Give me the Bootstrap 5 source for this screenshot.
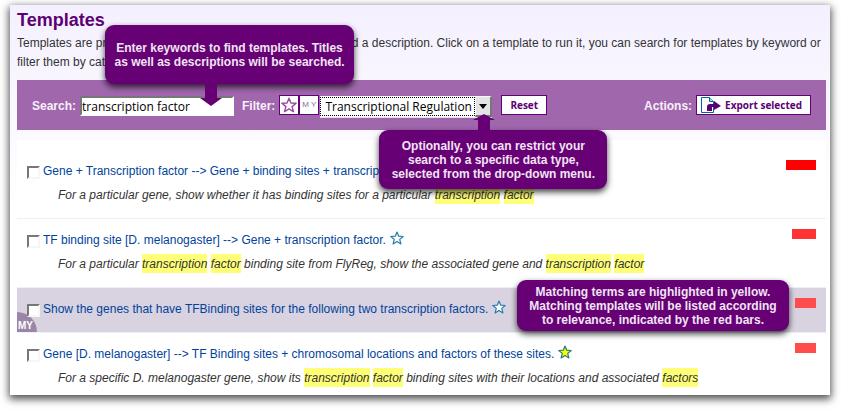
<!DOCTYPE html>
<html lang="en">
<head>
<meta charset="utf-8">
<meta name="viewport" content="width=device-width, initial-scale=1">
<title>Templates</title>
<link href="https://cdn.jsdelivr.net/npm/bootstrap@5.3.0/dist/css/bootstrap.min.css" rel="stylesheet">
<style>
  body { font-family: "Liberation Sans", Arial, sans-serif; font-size: 12px; line-height: 18px; color: #333; background: #fff; }
  .panel { margin: 5px 11px 15px 10px; padding: 4px 4px 8px 7px; background: linear-gradient(#f4f0ff, #fff 200px); box-shadow: 0 3px 8px 1px rgba(0,0,0,.7); }
  .page-title { font-size: 18px; line-height: 22px; color: #5c0073; }
  .intro { line-height: 19px; padding-top: 3px; margin-bottom: 8px; }
  .toolbar { background: #a067ad; padding: 15px 15px 12px; }
  .toolbar-label { color: #f8f0fa; font-weight: 700; line-height: 22px; margin-right: 4px; }
  .filter-label { margin-left: 8px; }
  .search-box { width: 154px; height: 20px; margin-top: 1px; padding: 0; border: 2px solid #fff; border-top-color: #777; border-left-color: #777; background: #fff; color: #000; font: 12px/16px "Open Sans", sans-serif; border-radius: 0; outline: 0; display: block; }
  .tool-btn { height: 20px; border: 1px solid #66007a; background: #fff; color: #5c0073; border-radius: 0; padding: 0; line-height: 18px; font-family: "Open Sans", sans-serif; font-size: 10px; font-weight: 700; }
  .square { width: 20px; }
  .my-btn { font-weight: 400; font-size: 8px; color: #8f6c9e; font-family: "Liberation Sans", sans-serif; }
  .type-filter { background: #fff; height: 22px; width: 172px; margin: 1px 1px 0; border-bottom: 1px solid #e8e4ea; }
  .type-filter select { appearance: none; min-width: 0; border: 1px dotted #000; border-radius: 0; background: #fff; color: #000; font: 12px/18px "Open Sans", sans-serif; padding: 0 0 0 4px; outline: 0; text-overflow: clip; margin: 1px 0; }
  .drop-arrow { width: 17px; background: #e4e4e4; border: 1px solid #f8f8f8; border-right: 2px solid #777; border-bottom: 2px solid #777; pointer-events: none; }
  .results { margin-top: 10px; }
  .result { background: #fff; border-bottom: 1px solid #f1eefb; padding: 10px 10px 14px 10px; }
  .result:first-child { padding-top: 20px; }
  .result:last-child { border: 0; padding-bottom: 0; }
  .result.mine { background: #d9d2e0; }
  .result-text { padding-top: 2px; }
  .result-text a { color: #00439c; text-decoration: none; }
  .result-head input { appearance: none; width: 13px; height: 13px; margin: 4px 3px 0 0; background: #fff; border: 2px solid #f6f6f6; border-top-color: #777; border-left-color: #777; flex: none; }
  .desc { margin: 6px 0 0 31px; font-style: italic; }
  .hit { background: #ffff77; padding: 3px 0 2px; }
  .star { width: 14px; height: 14px; margin-left: 4px; flex: none; }
  .relevance { height: 10px; flex: none; background: #ff4d4d; }
  .relevance.high { background: #f00; }
  .relevance.medium { background: #f33; }
  .my-tag { left: 0; bottom: 0; width: 20px; height: 20px; border-top-right-radius: 20px; background: #9a86a8; color: #fff; font-size: 10px; font-weight: 700; line-height: 13px; padding: 7px 0 0 1px; }
  .callout { z-index: 5; display: flex; align-items: center; justify-content: center; text-align: center; background: #660074; color: #f1e4f4; font-size: 12px; line-height: 14px; font-weight: 700; border-radius: 9px; box-shadow: 0 3px 6px rgba(0,0,0,.75); white-space: nowrap; }
  .callout-search { width: 249px; height: 59px; left: 25px; bottom: 32px; }
  .callout-type { width: 228px; height: 59px; right: -115px; top: 34px; }
  .callout-match { width: 272px; height: 51px; right: 37px; top: -8px; }
  .tail { width: 22px; fill: #660074; }
  .tail-down { left: 95px; top: 58px; height: 23px; }
  .tail-up { left: 94px; bottom: 58px; height: 17px; }
</style>
<script src="https://cdn.jsdelivr.net/npm/bootstrap@5.3.0/dist/js/bootstrap.bundle.min.js"></script>
</head>
<body>
<svg class="d-none" xmlns="http://www.w3.org/2000/svg">
  <symbol id="star" viewBox="0 0 14 14"><path d="M7 1 8.700 5.200 13.200 5.500 9.700 8.400 10.900 12.900 7 10.400 3.100 12.900 4.300 8.400.8 5.500 5.300 5.200Z" stroke-width="1.200" stroke-linejoin="round"/></symbol>
</svg>
<main class="panel">
  <h1 class="page-title fw-bold mb-0">Templates</h1>
  <p class="intro">Templates are predefined searches, each has a simple form and a description. Click on a template to run it, you can search for templates by keyword or filter them by category.</p>

  <form class="toolbar d-flex align-items-start">
    <label class="toolbar-label" for="search">Search:</label>
    <div class="position-relative">
      <input class="search-box" id="search" type="text" value="transcription factor">
      <div class="callout callout-search position-absolute">Enter keywords to find templates. Titles<br>as well as descriptions will be searched.
        <svg class="tail tail-down position-absolute" viewBox="0 0 22 23"><path d="M5 0H17V15H22L11 23 0 15H5Z"/></svg>
      </div>
    </div>
    <label class="toolbar-label filter-label" for="type">Filter:</label>
    <button class="tool-btn square d-flex align-items-center justify-content-center" type="button" aria-label="Favourites"><svg class="flex-shrink-0" width="16" height="16" fill="#fff" stroke="#93499f"><use href="#star"/></svg></button>
    <button class="tool-btn square my-btn" type="button">M Y</button>
    <div class="type-filter position-relative d-flex">
      <select id="type" class="flex-grow-1"><option>Transcriptional Regulation</option></select>
      <span class="drop-arrow d-flex align-items-center justify-content-center flex-shrink-0"><svg width="8" height="5" viewBox="0 0 8 5"><path d="M0 0H8L4 5Z"/></svg></span>
      <div class="callout callout-type position-absolute">Optionally, you can restrict your<br>search to a specific data type,<br>selected from the drop-down menu.
        <svg class="tail tail-up position-absolute" viewBox="0 0 22 17"><path d="M11 0 22 6H17V17H5V6H0Z"/></svg>
      </div>
    </div>
    <button class="tool-btn ms-2 px-2" type="reset">Reset</button>
    <span class="toolbar-label ms-auto">Actions:</span>
    <button class="tool-btn d-flex align-items-center ps-1 pe-2" type="button"><svg class="me-1" width="20" height="16" viewBox="0 0 20 16"><path d="M.5.500H8.500L12.500 4.500V15.500H.5Z" fill="#fff" stroke="#006699"/><path d="M8.500.500V4.500H12.500" fill="#b9dbe8" stroke="#006699"/><path d="M6 14V10Q6 7 9 7H13V4L20 9 13 13V10H11V14Z" fill="#5c0073"/></svg>Export selected</button>
  </form>

  <div class="results">
    <article class="result d-flex justify-content-between">
      <div class="result-text">
        <div class="result-head d-flex"><input type="checkbox" id="t1" aria-label="Select template 1"><a href="#">Gene + Transcription factor --&gt; Gene + binding sites + transcription factor.</a></div>
        <p class="desc">For a particular gene, show whether it has binding sites for a particular <span class="hit">transcription</span> <span class="hit">factor</span></p>
      </div>
      <div class="relevance high" style="width:30px"></div>
    </article>
    <article class="result d-flex justify-content-between">
      <div class="result-text">
        <div class="result-head d-flex"><input type="checkbox" id="t2" aria-label="Select template 2"><a href="#">TF binding site [D. melanogaster] --&gt; Gene + transcription factor.</a><svg class="star" fill="#fff" stroke="#267cab"><use href="#star"/></svg></div>
        <p class="desc">For a particular <span class="hit">transcription</span> <span class="hit">factor</span> binding site from FlyReg, show the associated gene and <span class="hit">transcription</span> <span class="hit">factor</span></p>
      </div>
      <div class="relevance medium" style="width:24px"></div>
    </article>
    <article class="result mine position-relative d-flex justify-content-between">
      <span class="my-tag position-absolute">MY</span>
      <div class="result-text position-relative">
        <div class="result-head d-flex"><input type="checkbox" id="t3" aria-label="Select template 3"><a href="#">Show the genes that have TFBinding sites for the following two transcription factors.</a><svg class="star" fill="#fff" stroke="#267cab"><use href="#star"/></svg></div>
      </div>
      <div class="relevance" style="width:21px"></div>
      <div class="callout callout-match position-absolute">Matching terms are highlighted in yellow.<br>Matching templates will be listed according<br>to relevance, indicated by the red bars.</div>
    </article>
    <article class="result d-flex justify-content-between">
      <div class="result-text">
        <div class="result-head d-flex"><input type="checkbox" id="t4" aria-label="Select template 4"><a href="#">Gene [D. melanogaster] --&gt; TF Binding sites + chromosomal locations and factors of these sites.</a><svg class="star" fill="#ff0" stroke="#267c7b"><use href="#star"/></svg></div>
        <p class="desc">For a specific D. melanogaster gene, show its <span class="hit">transcription</span> <span class="hit">factor</span> binding sites with their locations and associated <span class="hit">factors</span></p>
      </div>
      <div class="relevance" style="width:21px"></div>
    </article>
  </div>
</main>
</body>
</html>
